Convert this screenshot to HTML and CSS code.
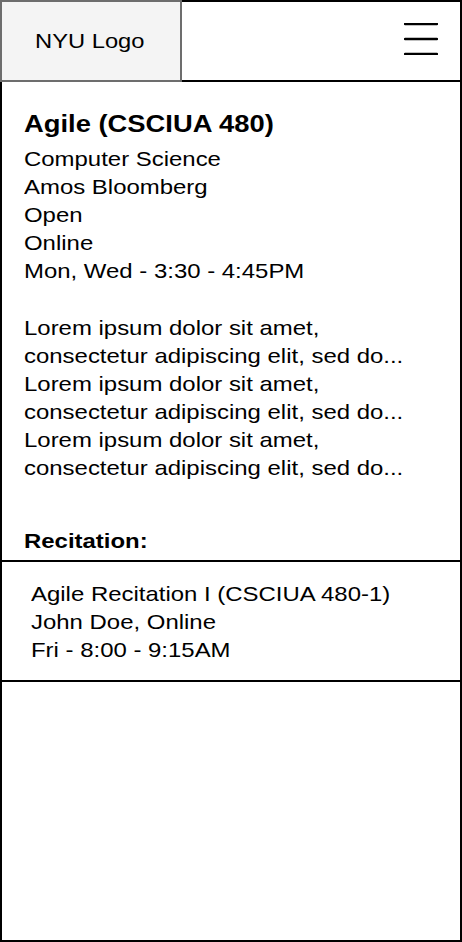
FILE: index.html
```html
<!DOCTYPE html>
<html lang="en">
<head>
<meta charset="utf-8">
<title>Course Detail</title>
<link rel="stylesheet" href="styles.css">
</head>
<body>
<div class="page">
  <header class="header">
    <div class="logo"><span class="wide">NYU Logo</span></div>
    <nav class="nav">
      <svg class="menu-icon" width="34" height="32" viewBox="0 0 34 32" aria-label="Menu">
        <line x1="1" y1="1" x2="33" y2="1" />
        <line x1="1" y1="16" x2="33" y2="16" />
        <line x1="1" y1="31" x2="33" y2="31" />
      </svg>
    </nav>
  </header>
  <main class="content">
    <section class="course">
      <div class="wide">
        <h1 class="course-title">Agile (CSCIUA 480)</h1>
        <div class="course-details">
          Computer Science<br>
          Amos Bloomberg<br>
          Open<br>
          Online<br>
          Mon, Wed - 3:30 - 4:45PM
        </div>
        <p class="course-desc">
          Lorem ipsum dolor sit amet,<br>
          consectetur adipiscing elit, sed do...<br>
          Lorem ipsum dolor sit amet,<br>
          consectetur adipiscing elit, sed do...<br>
          Lorem ipsum dolor sit amet,<br>
          consectetur adipiscing elit, sed do...
        </p>
        <h2 class="section-label">Recitation:</h2>
      </div>
    </section>
    <section class="recitation">
      <div class="wide">
        Agile Recitation I (CSCIUA 480-1)<br>
        John Doe, Online<br>
        Fri - 8:00 - 9:15AM
      </div>
    </section>
  </main>
</div>
</body>
</html>
```
FILE: styles.css
```css
html, body {
  margin: 0;
  padding: 0;
  background: #ffffff;
}

body {
  font-family: "Liberation Sans", Arial, Helvetica, sans-serif;
  color: #000;
}

.page {
  width: 462px;
  height: 942px;
  display: flex;
  flex-direction: column;
  box-sizing: border-box;
  overflow: hidden;
}

.wide {
  display: block;
  width: max-content;
  transform: scaleX(1.14);
  transform-origin: 0 0;
  white-space: nowrap;
}

.header {
  display: flex;
  height: 82px;
  flex: none;
}

.logo {
  width: 182px;
  box-sizing: border-box;
  border: 2px solid #6d6d6d;
  background: #f4f4f4;
  display: flex;
  align-items: center;
  justify-content: flex-start;
  padding-left: 33px;
  font-size: 21px;
}

.logo .wide {
  line-height: 24px;
  transform: scaleX(1.13);
}

.nav {
  flex: 1;
  box-sizing: border-box;
  border: 2px solid #000;
  border-left: none;
  display: flex;
  justify-content: flex-end;
  align-items: flex-start;
  padding: 21px 22px 0 0;
}

.menu-icon {
  display: block;
}

.menu-icon line {
  stroke: #000;
  stroke-width: 2.4;
  stroke-linecap: round;
}

.content {
  flex: 1;
  box-sizing: border-box;
  border: 2px solid #000;
  border-top: none;
}

.course {
  padding: 26px 0 5px 22px;
  border-bottom: 2px solid #000;
}

.course-title {
  margin: 0;
  font-size: 24px;
  line-height: 32px;
  font-weight: bold;
}

.course-details {
  margin-top: 5px;
  font-size: 21px;
  line-height: 28px;
}

.course-desc {
  margin: 29px 0 0;
  font-size: 21px;
  line-height: 28px;
}

.section-label {
  margin: 45px 0 0;
  font-size: 21px;
  line-height: 28px;
  font-weight: bold;
}

.recitation {
  padding: 18px 0 16px 29px;
  border-bottom: 2px solid #000;
  font-size: 21px;
  line-height: 28px;
}
```
